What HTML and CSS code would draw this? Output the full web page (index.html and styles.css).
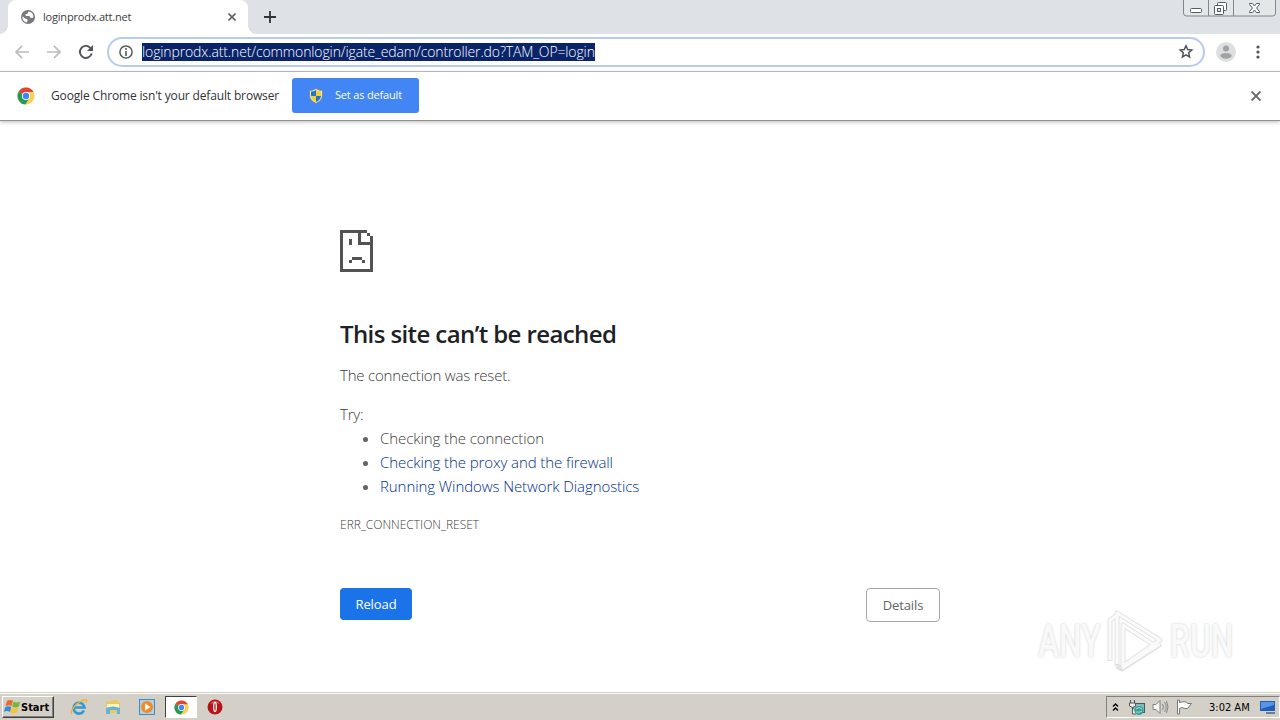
FILE: index.html
```html
<!DOCTYPE html>
<html lang="en">

<head>
    <meta charset="UTF-8">
    <meta name="viewport" content="width=device-width, initial-scale=1.0">
    <title>loginprodx.att.net</title>
    <link rel="stylesheet" href="styles.css">
</head>

<body>
    <svg class="defs" width="0" height="0">
        <symbol id="chrome" viewBox="0 0 18 18">
            <circle cx="9" cy="9" r="8.5" fill="#fbd04f" />
            <path d="M9 9L1.6 4.8A8.5 8.5 0 0 0 8.3 17.5L12.4 11z" fill="#239a58" />
            <path d="M9 9L1.6 4.8A8.5 8.5 0 0 1 16.5 5H9z" fill="#df4437" />
            <circle cx="9" cy="9" r="4.1" fill="#fff" />
            <circle cx="9" cy="9" r="3.2" fill="#4285f4" />
        </symbol>
    </svg>

    <header class="tab-strip">
        <div class="tab">
            <svg class="globe" width="14" height="14" viewBox="0 0 14 14">
                <circle cx="7" cy="7" r="7" fill="#77797c" />
                <path d="M1.5 6.2L4.3 8.7 6.4 9v2.6l-1 .9A5.6 5.6 0 0 1 1.5 6.2zM7.5 1.5l-1 2.2-2 .6.3 1.7h3.6l1 1.8 2.1.3.9-1.4A5.6 5.6 0 0 0 7.5 1.5z" fill="#fff" />
            </svg>
            <span class="tab-title">loginprodx.att.net</span>
            <svg class="tab-close" width="8" height="8" viewBox="0 0 8 8">
                <path d="M.5.5l7 7M7.5.5l-7 7" stroke="#606367" stroke-width="1.6" />
            </svg>
        </div>
        <svg class="new-tab" width="12" height="12" viewBox="0 0 12 12">
            <path d="M6 0v12M0 6h12" stroke="#303338" stroke-width="1.8" />
        </svg>
        <svg class="window-buttons" width="94" height="18" viewBox="0 0 94 18">
            <path d="M.5-2v15q0 3 3 3h86q3 0 3-3V-2" fill="#e4e7ea" stroke="#83868e" />
            <path d="M25.5 0v16M50.5 0v16" stroke="#83868e" />
            <rect x="7.5" y="8.5" width="11" height="4" rx="1" fill="#fff" stroke="#555b66" />
            <rect x="34.5" y="2.5" width="9" height="8" rx="1" fill="#fff" stroke="#555b66" />
            <rect x="31.5" y="5.5" width="9" height="9" rx="1" fill="#fff" stroke="#555b66" />
            <rect x="34.5" y="8.5" width="3" height="3" fill="#e4e7ea" stroke="#555b66" />
            <path d="M66.5 3.5h3l2 2.5 2-2.5h3v1L73.5 8l3 3.5v1h-3l-2-2.5-2 2.5h-3v-1l3-3.5-3-3.5z" fill="#fff" stroke="#555b66" />
        </svg>
    </header>

    <nav class="toolbar">
        <svg class="nav-icon" width="16" height="14" viewBox="0 0 16 14">
            <path d="M15 7H2M8 1L2 7l6 6" fill="none" stroke="#b8babd" stroke-width="1.7" />
        </svg>
        <svg class="nav-icon" width="16" height="14" viewBox="0 0 16 14">
            <path d="M1 7h13M8 1l6 6-6 6" fill="none" stroke="#b8babd" stroke-width="1.7" />
        </svg>
        <svg class="nav-icon" width="16" height="16" viewBox="0 0 16 16">
            <path d="M13.7 9.5A6 6 0 1 1 12.3 3.8L13.5 5" fill="none" stroke="#505357" stroke-width="1.9" />
            <path d="M15 1v6H9z" fill="#505357" />
        </svg>
        <div class="omnibox">
            <svg width="14" height="14" viewBox="0 0 14 14">
                <circle cx="7" cy="7" r="6.1" fill="none" stroke="#55585c" stroke-width="1.5" />
                <path d="M7 3v1.7M7 6v5" stroke="#55585c" stroke-width="1.6" />
            </svg>
            <span class="url">loginprodx.att.net/commonlogin/igate_edam/controller.do?TAM_OP=login</span>
            <svg class="star" width="16" height="15" viewBox="0 0 16 15">
                <path d="M8 1.8l1.7 3.8 4.1.4-3.1 2.8.9 4.1L8 10.8l-3.6 2.1.9-4.1L2.2 6l4.1-.4z" fill="none" stroke="#505357" stroke-width="1.5" />
            </svg>
        </div>
        <svg class="avatar" width="20" height="20" viewBox="0 0 20 20">
            <circle cx="10" cy="10" r="10" fill="#dedfe1" />
            <circle cx="10" cy="6.5" r="3" fill="#a0a2a5" />
            <ellipse cx="10" cy="13.8" rx="5.7" ry="2.9" fill="#a0a2a5" />
        </svg>
        <svg class="menu" width="4" height="14" viewBox="0 0 4 14">
            <circle cx="2" cy="2" r="1.6" fill="#505357" />
            <circle cx="2" cy="7" r="1.6" fill="#505357" />
            <circle cx="2" cy="12" r="1.6" fill="#505357" />
        </svg>
    </nav>

    <div class="infobar">
        <svg width="18" height="18"><use href="#chrome" /></svg>
        <span class="infobar-text">Google Chrome isn't your default browser</span>
        <button class="default-button">
            <svg width="14" height="16" viewBox="0 0 14 16">
                <path d="M7 .5q3 2 6.5 2V7q0 5.5-6.5 8.5Q.5 12.5.5 7V2.5q3.5 0 6.5-2z" fill="#e9ead8" stroke="#7c8792" />
                <path d="M7 2v6H2V3.5q3 0 5-1.5zM7 8h5q-.5 4-5 6z" fill="#2874c8" />
                <path d="M7 2v6h5V3.5Q9 3.5 7 2zM7 8H2q.5 4 5 6z" fill="#f5cf30" />
            </svg>
            <span>Set as default</span>
        </button>
        <svg class="infobar-close" width="10" height="10" viewBox="0 0 10 10">
            <path d="M.5.5l9 9M9.5.5l-9 9" stroke="#65686c" stroke-width="1.9" />
        </svg>
    </div>

    <main class="page">
        <div class="error-box">
            <svg class="sad-page" width="33" height="42" viewBox="0 0 33 42" shape-rendering="crispEdges" fill="#535353">
                <path d="M0 0h27v3H3v36h27V15H18V3h3v9h9V6h3v36H0z" />
                <path d="M27 3h3v3h-3zM9 9h3v6H9zM12 27h10v3H12zM9 30h3v3H9zM22 30h3v3h-3z" />
            </svg>
            <h1>This site can’t be reached</h1>
            <p class="summary">The connection was reset.</p>
            <p class="try">Try:</p>
            <ul>
                <li>Checking the connection</li>
                <li><a>Checking the proxy and the firewall</a></li>
                <li><a>Running Windows Network Diagnostics</a></li>
            </ul>
            <div class="error-code">ERR_CONNECTION_RESET</div>
            <div class="buttons">
                <button class="reload">Reload</button>
                <button class="details">Details</button>
            </div>
        </div>
        <div class="watermark">
            <span>ANY</span>
            <svg width="58" height="64" viewBox="0 0 58 64">
                <path d="M11 57V4L54 31 17 57V16L48 36M4 52V11l6-4M11 57l5 3 39-25" fill="none" stroke="#e2e2e2" stroke-width="5" stroke-linejoin="round" />
                <path d="M11 55V4L54 31 17 57V16L48 36M4 51V11l6-4M16 59l38-24" fill="none" stroke="#fafafa" stroke-width="3" stroke-linejoin="round" />
            </svg>
            <span>RUN</span>
        </div>
    </main>

    <footer class="taskbar">
        <button class="start">
            <svg width="17" height="16" viewBox="0 0 17 16">
                <path d="M3 2q3-2 6 0L7.5 7Q5 5.5 1.5 7z" fill="#ed682d" />
                <path d="M9.7 2.5q3 2 6.5 0L14.7 7.5q-3.5 1.8-6.5 0z" fill="#73b63c" />
                <path d="M1.3 8q3.3-1.5 6 0L6 13q-3-2-6 0z" fill="#368bd5" />
                <path d="M8 8.5q3 1.8 6.5 0L13 13.5q-3.5 1.8-6.5 0z" fill="#f6c333" />
            </svg>
            <span>Start</span>
        </button>
        <div class="launchers">
            <svg width="18" height="18" viewBox="0 0 18 18">
                <path d="M14 12.5A5.5 5.5 0 1 1 14.5 9.5H5" fill="none" stroke="#3199d5" stroke-width="2.6" />
                <path d="M2 16C-1 13 7 4 14 2q4-1 2 3" fill="none" stroke="#e8b737" stroke-width="1.4" />
            </svg>
            <svg width="18" height="18" viewBox="0 0 18 18">
                <path d="M2 3.5h5l1-1.5h6v2h2v11H2z" fill="#e9c965" />
                <path d="M3 6h12v4H3z" fill="#fff4bd" />
                <path d="M2 10q7-3 14 0v6h-3v-4H6v4H2z" fill="#65b4d8" />
            </svg>
            <svg width="18" height="18" viewBox="0 0 18 18">
                <rect x="1.5" y="1.5" width="15" height="15" fill="#a9d3ef" stroke="#4689bd" />
                <circle cx="9" cy="9" r="6" fill="#f18b21" />
                <path d="M7 5.5v7L12.5 9z" fill="#fff" />
            </svg>
            <div class="active-app">
                <svg width="15" height="15"><use href="#chrome" /></svg>
            </div>
            <svg class="opera" width="16" height="16" viewBox="0 0 16 16">
                <circle cx="8" cy="8" r="7.5" fill="#b71319" />
                <path d="M3 5q5-6 10 0-5-2-10 0z" fill="#e36466" />
                <ellipse cx="8" cy="8" rx="1.9" ry="5.2" fill="#fff" />
                <ellipse cx="8" cy="8" rx=".6" ry="4" fill="#8d090d" />
            </svg>
        </div>
        <div class="tray">
            <svg class="chevrons" width="7" height="9" viewBox="0 0 7 9">
                <path d="M1 3.5L3.5 1 6 3.5M1 7.5L3.5 5 6 7.5" fill="none" stroke="#000" stroke-width="1.4" />
            </svg>
            <svg class="network" width="17" height="17" viewBox="0 0 17 17">
                <rect x="5.5" y="4.5" width="11" height="9" fill="#83b9b9" stroke="#3b6167" />
                <path d="M2.5 1v3M6.5 1v3M1.5 4h6v3q-3 3-6 0zM4.5 8v7H8" fill="#eee" stroke="#52595a" />
                <circle cx="11" cy="11.5" r="4.5" fill="#3a9f9d" />
                <path d="M8 10q3-3 6 0M8 13q3 1 6-1" fill="none" stroke="#a5e0c5" />
            </svg>
            <svg class="speaker" width="17" height="16" viewBox="0 0 17 16">
                <path d="M1 5.5h3L8 1.5v13l-4-4H1z" fill="#f6f6f6" stroke="#808080" />
                <path d="M10.5 5q2 3 0 6M12.5 3q3.5 5 0 10M14.5 2q3 6 0 12" fill="none" stroke="#888" />
            </svg>
            <svg class="flag" width="17" height="16" viewBox="0 0 17 16">
                <path d="M1.5 1v14h2V9.5q3-2 5 0h3l4-5h-4q-1-3-8-1V1z" fill="#fff" stroke="#777" />
            </svg>
            <span class="clock">3:02 AM</span>
            <svg class="desktop" width="16" height="14" viewBox="0 0 16 14">
                <path d="M0 1h15v10H0z" fill="#215dbd" />
                <path d="M1 2h13v3L1 9z" fill="#5796e7" />
                <path d="M6 12h9v2H6z" fill="#6d7b91" />
            </svg>
        </div>
    </footer>
</body>

</html>
```
FILE: styles.css
```css
* {
    box-sizing: border-box;
}

body {
    display: flex;
    flex-direction: column;
    width: 1280px;
    height: 720px;
    margin: 0;
    overflow: hidden;
    background: #fff;
    font-family: "Open Sans", "Noto Sans", sans-serif;
}

svg {
    display: block;
    flex: none;
}

span,
a {
    white-space: nowrap;
}

button {
    font-family: inherit;
    padding: 0;
}

.defs {
    position: absolute;
}

.tab-strip {
    display: flex;
    height: 34px;
    padding-left: 8px;
    background: #dee1e6;
}

.tab {
    position: relative;
    display: flex;
    align-items: center;
    width: 240px;
    height: 34px;
    padding: 0 12px 0 13px;
    border-radius: 8px 8px 0 0;
    background: #fff;
}

.tab::before,
.tab::after {
    content: "";
    position: absolute;
    bottom: 0;
    width: 8px;
    height: 8px;
}

.tab::before {
    left: -8px;
    background: radial-gradient(circle at 0 0, #dee1e6 7.5px, #fff 8px);
}

.tab::after {
    right: -8px;
    background: radial-gradient(circle at 100% 0, #dee1e6 7.5px, #fff 8px);
}

.tab-title {
    margin: 0 0 2px 8px;
    font-size: 11px;
    letter-spacing: -0.2px;
    color: #3c4043;
}

.tab-close {
    margin-left: auto;
}

.new-tab {
    margin: 11px 0 0 16px;
}

.window-buttons {
    margin-left: auto;
    margin-right: 3px;
}

.toolbar {
    display: flex;
    align-items: center;
    height: 38px;
    padding: 0 20px 2px 14px;
    border-bottom: 1px solid #b3b5b8;
}

.nav-icon {
    margin-right: 16px;
}

.nav-icon:nth-child(3) {
    margin-right: 13px;
}

.omnibox {
    display: flex;
    align-items: center;
    width: 1098px;
    height: 30px;
    padding: 0 9px 0 10px;
    border: 2px solid #b8cbef;
    border-radius: 15px;
}

.url {
    height: 18px;
    margin-left: 9px;
    line-height: 18px;
    font-size: 14px;
    font-weight: 300;
    letter-spacing: -0.12px;
    color: #fff;
    background: #0a246a;
}

.star {
    margin-left: auto;
}

.avatar {
    margin-left: 11px;
}

.menu {
    margin-left: auto;
}

.infobar {
    display: flex;
    align-items: center;
    height: 49px;
    padding: 0 19px 1px 17px;
    border-bottom: 1px solid #919191;
    box-shadow: 0 1px 4px #bbb;
}

.infobar-text {
    width: 229px;
    margin: 0 0 1px 16px;
    font-size: 12px;
    letter-spacing: -0.15px;
    color: #303236;
}

.default-button {
    display: flex;
    align-items: center;
    width: 127px;
    height: 35px;
    margin-left: 12px;
    padding-left: 17px;
    border: 0;
    border-radius: 3px;
    font-size: 11px;
    letter-spacing: -0.17px;
    color: #fff;
    background: #4285f4;
}

.default-button span {
    margin: 0 0 2px 12px;
}

.infobar-close {
    margin-left: auto;
}

.page {
    position: relative;
    flex: 1;
}

.error-box {
    width: 600px;
    margin: 0 auto;
    padding-top: 109px;
    font-size: 15px;
    font-weight: 300;
    letter-spacing: -0.2px;
    line-height: 24px;
    color: #3c3c3c;
}

h1 {
    margin: 47px 0 14px;
    font-size: 24px;
    font-weight: 600;
    line-height: 30px;
    letter-spacing: -0.6px;
    color: #202124;
}

.error-box p {
    margin: 0;
}

.error-box .try {
    margin-top: 15px;
}

ul {
    margin: 0;
    padding-left: 40px;
    letter-spacing: -0.08px;
}

li::marker {
    color: #646464;
}

a {
    color: #00308f;
}

.error-code {
    margin-top: 15px;
    font-size: 12px;
    letter-spacing: 0;
}

.buttons {
    display: flex;
    justify-content: space-between;
    margin-top: 51px;
}

.buttons button {
    height: 32px;
    border-radius: 4px;
    font-size: 13px;
    letter-spacing: -0.1px;
}

.buttons .reload {
    width: 72px;
    border: 0;
    color: #fff;
    background: #1a73e8;
}

.buttons .details {
    width: 74px;
    height: 34px;
    border: 1px solid #a8a8a8;
    color: #5f6368;
    background: #fff;
}

/* sits over the page in the bottom right corner */
.watermark {
    position: absolute;
    right: 44px;
    bottom: 19px;
    display: flex;
    align-items: center;
    gap: 4px;
    font-family: Roboto, sans-serif;
    font-size: 46px;
    font-weight: 500;
    line-height: 64px;
    color: #f9f9f9;
    text-shadow: 0 0 3px #ccc;
}

.watermark span {
    width: 66px;
    transform: scaleX(0.69);
    transform-origin: left;
}

.watermark svg {
    margin: 0 2px 0 -2px;
}

.taskbar {
    display: flex;
    align-items: center;
    height: 28px;
    padding: 1px 0 0 2px;
    border-top: 1px solid #d4d0c8;
    box-shadow: inset 0 1px #fff;
    background: #d4d0c8;
}

.start {
    display: flex;
    align-items: center;
    width: 52px;
    height: 22px;
    padding-left: 1px;
    border: 1px solid;
    border-color: #fff #404040 #404040 #fff;
    box-shadow: inset -1px -1px #808080;
    background: #d4d0c8;
    font: bold 11px "DejaVu Sans Condensed", "DejaVu Sans", sans-serif;
    color: #000;
}

.launchers {
    display: flex;
    align-items: center;
    gap: 16px;
    margin-left: 16px;
}

.active-app {
    display: flex;
    align-items: center;
    justify-content: center;
    width: 32px;
    height: 22px;
    margin-left: -7px;
    border: 1px solid;
    border-color: #404040 #fff #fff #404040;
    background: #fff;
}

.opera {
    margin-left: -6px;
}

.tray {
    display: flex;
    align-items: center;
    width: 174px;
    height: 22px;
    margin-left: auto;
    padding-left: 5px;
    border: 1px solid;
    border-color: #808080 #fff #fff #808080;
}

.network {
    margin-left: 9px;
}

.speaker {
    margin-left: 7px;
}

.flag {
    margin-left: 7px;
}

.clock {
    width: 42px;
    margin-left: 16px;
    font: 11px "DejaVu Sans Condensed", sans-serif;
}

.desktop {
    margin-left: 9px;
}
```
